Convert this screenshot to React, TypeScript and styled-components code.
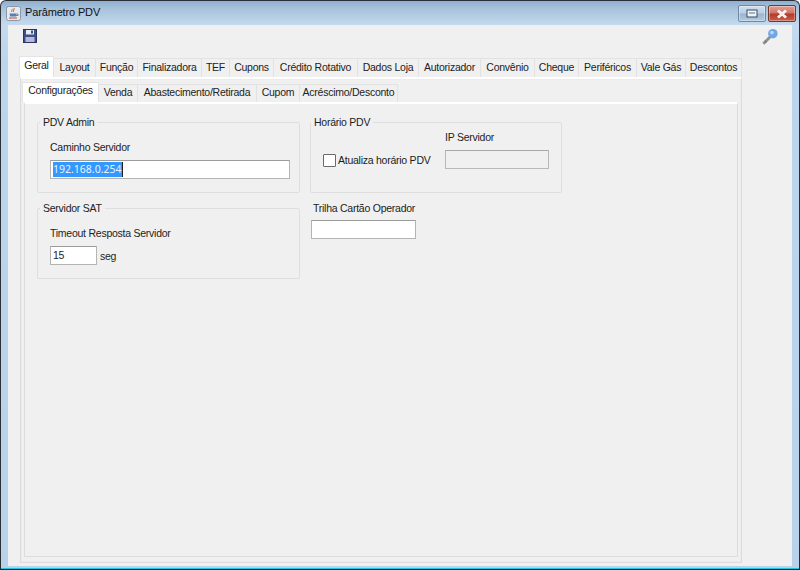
import React from "react";
import styled, { createGlobalStyle } from "styled-components";

const Global = createGlobalStyle`
  html, body { margin: 0; padding: 0; background: #fff; }
  * { box-sizing: border-box; }
  body { font-family: "Liberation Sans", Arial, sans-serif; font-size: 10.5px; letter-spacing: -0.25px; color: #1c1c1c; }
`;

const Win = styled.div`
  width: 800px; height: 570px; display: flex; flex-direction: column;
  border: 1px solid #2c3036; border-radius: 6px 6px 0 0; overflow: hidden;
  border-bottom: 1px solid #1a2a30;
  background: linear-gradient(180deg, #8fb0d0 0, #a8c3dc 8px, #c4daee 24px, #bcd5ee 60px, #b8d2ec 100%);
`;
const TitleBar = styled.div`
  height: 24px; flex: none; display: flex; align-items: center; padding: 0 3px 0 5px; gap: 4px;
  font-size: 11px; letter-spacing: -0.15px;
`;
const TitleText = styled.span`flex: 1; color: #111; position: relative; top: -1px;`;
const Buttons = styled.div`display: flex; gap: 2px; align-self: flex-start; margin-top: 4px;`;
const WinBtn = styled.div<{ $close?: boolean }>`
  width: 28px; height: 17px; border: 1px solid ${p => (p.$close ? "#6b3a33" : "#6f87a0")};
  border-radius: 2px; display: flex; align-items: center; justify-content: center;
  background: ${p => p.$close
    ? "linear-gradient(180deg,#e0a194 0,#d0766a 45%,#b43a2a 55%,#c9604c 100%)"
    : "linear-gradient(180deg,#d2e0ee 0,#b9cfe4 45%,#9ab7d4 55%,#b4cbe2 100%)"};
  box-shadow: inset 0 0 0 1px rgba(255,255,255,.35);
`;
const Client = styled.div`
  flex: 1; margin: 0 7px 2px; background: #f0f0f0; display: flex; flex-direction: column; min-height: 0;
`;
const Footer = styled.div`height: 1px; flex: none; background: #25c6dc;`;
const Toolbar = styled.div`
  height: 31px; flex: none; display: flex; justify-content: space-between; align-items: flex-start;
  padding: 4px 13px 0 15px;
`;
const KeyWrap = styled.div`margin-top: -1px; line-height: 0;`;
const TabStrip = styled.div<{ $inner?: boolean }>`
  display: flex; align-items: flex-end; flex: none;
  height: ${p => (p.$inner ? "20px" : "21px")};
`;
const Tab = styled.div<{ $active?: boolean; $w: number; $inner?: boolean }>`
  width: ${p => p.$w}px; flex: none; display: flex; align-items: center; justify-content: center;
  white-space: nowrap;
  height: ${p => (p.$active ? "100%" : "calc(100% - 2px)")};
  background: ${p => (p.$active ? "#fff" : "#f0f0f0")};
  border: 1px solid ${p => (p.$active ? "#e4e4e4" : "#e2e2e2")};
  border-bottom: none; margin-left: -1px;
  color: #222;
  padding-bottom: ${p => (p.$active ? (p.$inner ? "5px" : "4px") : (p.$inner ? "3px" : "2px"))};
`;
const OuterWrap = styled.div`
  flex: 1; margin: 0 50px 0 11px; display: flex; flex-direction: column; min-height: 0;
  padding-bottom: 3px;
`;
const OuterTabs = styled(TabStrip)`margin-left: 1px;`;
const Panel = styled.div`
  flex: 1; min-height: 0; display: flex; flex-direction: column; margin-left: 1px;
  border: 1px solid #dcdcdc; border-top: 2px solid #fff;
  background: #f0f0f0; padding: 3px 3px 5px 2px;
  box-shadow: inset 0 0 0 1px #ececec;
`;
const InnerPanel = styled.div`
  flex: 1; min-height: 0; margin-left: 1px; border: 1px solid #dcdcdc; border-top: 2px solid #fff;
  padding: 12px 0 0 12px; display: flex; gap: 10px; align-items: flex-start;
`;
const Column = styled.div<{ $w: number }>`
  width: ${p => p.$w}px; flex: none; display: flex; flex-direction: column; gap: 9px;
`;
const Group = styled.fieldset`
  margin: 0; height: 77px; padding: 0 0 0 12px; min-width: 0;
  border: 1px solid #dedede; border-radius: 2px;
`;
const Legend = styled.legend<{ $tight?: boolean }>`
  padding: 0 3px; height: 13px; line-height: 12px; color: #222;
  margin-left: ${p => (p.$tight ? "-12px" : "-10px")};
`;
const Label = styled.div`line-height: 13px; color: #222;`;
const FieldLabel = styled(Label)`margin-top: 12px; margin-bottom: 6px;`;
const Input = styled.div<{ $w: number; $disabled?: boolean }>`
  width: ${p => p.$w}px; height: 19px; flex: none; display: flex; align-items: center; padding-left: 2px;
  background: ${p => (p.$disabled ? "#f0f0f0" : "#fff")};
  border: 1px solid ${p => (p.$disabled ? "#b8b8b8" : "#b4b4b4")};
  border-top-color: ${p => (p.$disabled ? "#a8a8a8" : "#9c9c9c")};
  line-height: 15px;
`;
const Selected = styled.span`
  background: #3399ff; color: #e8f3ff; height: 15px; border-right: 1px solid #222;
  font-family: "Noto Sans", sans-serif; font-size: 10.5px; letter-spacing: 0;
`;
const Row = styled.div`display: flex; align-items: center; gap: 3px;`;
const HorarioBody = styled.div`display: flex;`;
const CheckRow = styled.div`display: flex; align-items: center; gap: 2px; margin-top: 24px; height: 14px; width: 122px; flex: none;`;
const Check = styled.div`width: 13px; height: 13px; flex: none; background: #fff; border: 1px solid #6a6a6a; border-radius: 1px;`;
const IpCol = styled.div`display: flex; flex-direction: column;`;
const IpLabel = styled(Label)`margin-top: 2px; margin-bottom: 6px;`;
const TrilhaBlock = styled.div`margin-left: 1px;`;
const TrilhaLabel = styled(Label)`margin: 0 0 5px 2px;`;

const CupIcon = () => (
  <svg width="15" height="15" viewBox="0 0 15 15">
    <rect x="0.5" y="0.5" width="14" height="14" rx="2" fill="#e6e9ee" stroke="#8b97a6" />
    <path d="M8 2c1 1.5-1.5 2.5-.5 4M6 3c.7 1-1 2-.3 3" stroke="#d2691e" strokeWidth="1" fill="none" />
    <path d="M3.5 7.5h7l-.6 3H4.1z" fill="#5a7fb0" />
    <path d="M10.5 8h1.5v1.5h-2" stroke="#5a7fb0" fill="none" />
    <path d="M3 12h8" stroke="#c04a2a" strokeWidth="1" />
  </svg>
);
const SaveIcon = () => (
  <svg width="14" height="14" viewBox="0 0 14 14">
    <rect x="0.5" y="0.5" width="13" height="13" fill="#3d4f85" stroke="#2a3560" />
    <rect x="3" y="1" width="8" height="4.5" fill="#e8ecf4" />
    <rect x="8" y="1.5" width="2" height="3" fill="#3d4f85" />
    <rect x="2.5" y="8" width="9" height="5" fill="#b4b9dd" />
  </svg>
);
const KeyIcon = () => (
  <svg width="17" height="17" viewBox="0 0 18 18">
    <path d="M9 9 L2.5 15.5" stroke="#8b9190" strokeWidth="3" strokeLinecap="square" />
    <path d="M3 13.5l1.8 1.8" stroke="#6f7574" strokeWidth="1.2" />
    <circle cx="11.5" cy="6" r="5" fill="#6ea6e8" />
    <circle cx="10.5" cy="4.8" r="2" fill="#b4d6fa" />
  </svg>
);

const outer: [string, number][] = [
  ["Layout", 43], ["Função", 43], ["Finalizadora", 65], ["TEF", 29], ["Cupons", 45],
  ["Crédito Rotativo", 85], ["Dados Loja", 62], ["Autorizador", 63], ["Convênio", 55],
  ["Cheque", 45], ["Periféricos", 59], ["Vale Gás", 50], ["Descontos", 57],
];
const inner: [string, number][] = [
  ["Venda", 40], ["Abastecimento/Retirada", 120], ["Cupom", 44], ["Acréscimo/Desconto", 99],
];

export default function App() {
  return (
    <Win>
      <Global />
      <TitleBar>
        <CupIcon />
        <TitleText>Parâmetro PDV</TitleText>
        <Buttons>
          <WinBtn>
            <svg width="12" height="9" viewBox="0 0 12 9"><rect x="1" y="1" width="10" height="7" fill="#eef3f8" stroke="#3e4c5c" /><rect x="3" y="3" width="6" height="2" fill="#9db4cb" /></svg>
          </WinBtn>
          <WinBtn $close>
            <svg width="14" height="10" viewBox="0 0 14 10"><path d="M3 1.5l8 7M11 1.5l-8 7" stroke="#fff" strokeWidth="2.6" /><path d="M3 1.5l8 7M11 1.5l-8 7" stroke="#f4ece8" strokeWidth="1.4" /></svg>
          </WinBtn>
        </Buttons>
      </TitleBar>
      <Client>
        <Toolbar>
          <SaveIcon />
          <KeyWrap><KeyIcon /></KeyWrap>
        </Toolbar>
        <OuterWrap>
          <OuterTabs>
            <Tab $active $w={35}>Geral</Tab>
            {outer.map(([t, w]) => <Tab key={t} $w={w}>{t}</Tab>)}
          </OuterTabs>
          <Panel>
            <TabStrip $inner>
              <Tab $active $inner $w={77}>Configurações</Tab>
              {inner.map(([t, w]) => <Tab key={t} $inner $w={w}>{t}</Tab>)}
            </TabStrip>
            <InnerPanel>
              <Column $w={263}>
                <Group>
                  <Legend>PDV Admin</Legend>
                  <FieldLabel>Caminho Servidor</FieldLabel>
                  <Input $w={240}><Selected>192.168.0.254</Selected></Input>
                </Group>
                <Group>
                  <Legend>Servidor SAT</Legend>
                  <FieldLabel>Timeout Resposta Servidor</FieldLabel>
                  <Row>
                    <Input $w={47}>15</Input>
                    <span>seg</span>
                  </Row>
                </Group>
              </Column>
              <Column $w={252}>
                <Group>
                  <Legend $tight>Horário PDV</Legend>
                  <HorarioBody>
                    <CheckRow>
                      <Check />
                      <span>Atualiza horário PDV</span>
                    </CheckRow>
                    <IpCol>
                      <IpLabel>IP Servidor</IpLabel>
                      <Input $w={104} $disabled />
                    </IpCol>
                  </HorarioBody>
                </Group>
                <TrilhaBlock>
                  <TrilhaLabel>Trilha Cartão Operador</TrilhaLabel>
                  <Input $w={105} />
                </TrilhaBlock>
              </Column>
            </InnerPanel>
          </Panel>
        </OuterWrap>
      </Client>
      <Footer />
    </Win>
  );
}
